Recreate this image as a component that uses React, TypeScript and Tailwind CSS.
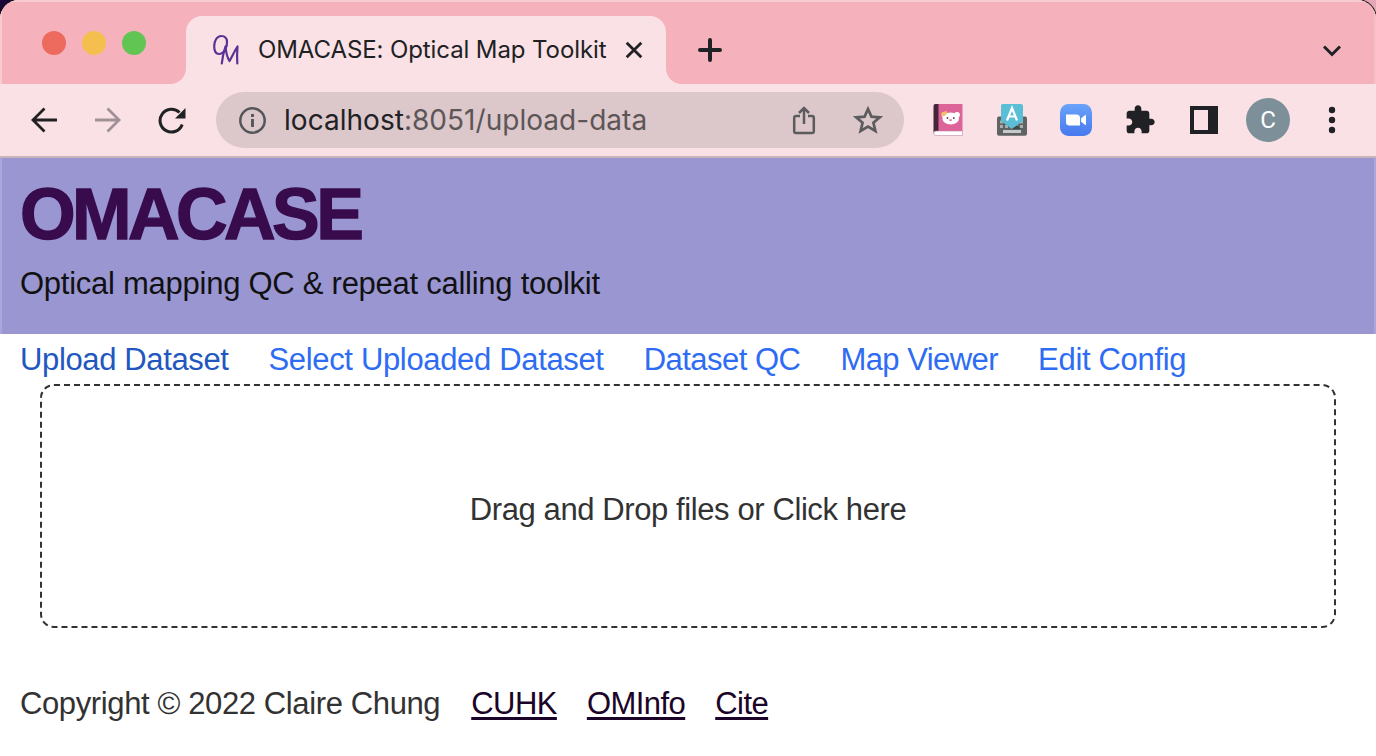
import React from "react";

const navItems = [
  { label: "Upload Dataset", style: "tracking-[-0.37px] text-[#2357c0]" },
  { label: "Select Uploaded Dataset", style: "tracking-[-0.34px]" },
  { label: "Dataset QC", style: "tracking-[-0.52px]" },
  { label: "Map Viewer", style: "tracking-[-0.54px]" },
  { label: "Edit Config", style: "tracking-[-0.32px]" },
];
const footerLinks = ["CUHK", "OMInfo", "Cite"];

function TabStrip() {
  return (
    <div className="flex h-[84px] items-end bg-[#f5b1bc] shadow-[inset_2px_2px_0_#f8cad2,inset_-2px_0_0_#f7bfc8]">
      <div className="flex h-[84px] w-[170px] gap-4 pt-[31px] pl-[42px]">
        <span className="size-6 rounded-full bg-[#ed6a5e]" />
        <span className="size-6 rounded-full bg-[#f5bf4f]" />
        <span className="size-6 rounded-full bg-[#61c554]" />
      </div>
      <svg className="size-4" viewBox="0 0 16 16">
        <path d="M16 0V16H0C9 16 16 9 16 0Z" fill="#fae1e5" />
      </svg>
      <div className="flex h-[68px] w-[480px] items-center rounded-t-[16px] bg-[#fae1e5] pl-[26px]">
        <svg className="h-[32px] w-[28px] shrink-0" viewBox="0 0 28 32" fill="none" stroke="#5b3296" strokeWidth="2.200" strokeLinecap="round" strokeLinejoin="round">
          <path d="M9.500 2C5 1.700 2.200 7 2.200 12C2.200 17 4 20 7 20C12 20 15.500 13 15 7.500C14.700 3.800 12.500 2 9.500 2Z" />
          <path d="M9.800 29.500C10.500 23 12 17 13.500 12.500C14 18 15.500 24 17.500 27C20 23 22.500 17 25.500 12.500C25 18 25 24 25.300 29.500" />
        </svg>
        <span className="ml-[18px] w-[349px] whitespace-nowrap font-['Inter'] text-[24px] leading-8 tracking-[-0.1px] text-[#202124]">
          OMACASE: Optical Map Toolkit
        </span>
        <svg className="ml-[18px] size-[18px]" viewBox="0 0 18 18" stroke="#202124" strokeWidth="2.800">
          <path d="M1.700 1.700L16.300 16.300M16.300 1.700L1.700 16.300" />
        </svg>
      </div>
      <svg className="size-4" viewBox="0 0 16 16">
        <path d="M0 0V16H16C7 16 0 9 0 0Z" fill="#fae1e5" />
      </svg>
      <svg className="mb-[22px] ml-4 size-6" viewBox="0 0 24 24" stroke="#202124" strokeWidth="4" strokeLinecap="round">
        <path d="M12 2V22M2 12H22" />
      </svg>
      <svg className="mr-[35px] mb-[27px] ml-auto h-[12px] w-[18px]" viewBox="0 0 18 12" fill="none" stroke="#202124" strokeWidth="3">
        <path d="M1 1.500L9 9.500L17 1.500" />
      </svg>
    </div>
  );
}

function BackArrow({ color }: { color: string }) {
  return (
    <svg className="h-[26px] w-[26px]" viewBox="0 0 26 26" fill="none" stroke={color} strokeWidth="2.800">
      <path d="M26 13H2M13.500 1.500L2 13L13.500 24.500" />
    </svg>
  );
}

function Toolbar() {
  return (
    <div className="flex h-[74px] items-center border-b-2 border-[#c9b4b9] bg-[#fae1e5] pl-[31px]">
      <BackArrow color="#202124" />
      <span className="ml-[38px] rotate-180">
        <BackArrow color="#9f9195" />
      </span>
      <svg className="ml-[37px] h-[27px] w-[28px]" viewBox="0 0 28 27" fill="none">
        <path d="M24.200 17.500A11.400 11.400 0 1 1 21.500 5.500" stroke="#202124" strokeWidth="3" />
        <path d="M27.500 1V11.500H17Z" fill="#202124" />
      </svg>

      <div className="ml-[30px] flex h-14 w-[688px] items-center rounded-full bg-[#dcc7ca] pl-[23px]">
        <svg className="size-[27px] shrink-0" viewBox="0 0 27 27" fill="none">
          <circle cx="13.500" cy="13.500" r="12.200" stroke="#54565a" strokeWidth="2.500" />
          <path d="M13.500 12V20M13.500 7V10" stroke="#54565a" strokeWidth="2.900" />
        </svg>
        <div className="ml-[18px] w-[508px] whitespace-nowrap font-['Inter'] text-[28px] leading-9 tracking-[0.03px] text-[#5c5658]">
          <span className="text-[#202124]">localhost</span>:8051/upload-data
        </div>
        <svg className="h-[30px] w-[24px] shrink-0" viewBox="0 0 24 30" fill="none" stroke="#5c5c5e" strokeWidth="2.500">
          <path d="M8 11H4Q2.200 11 2.200 12.800V26.200Q2.200 28 4 28H20Q21.800 28 21.800 26.200V12.800Q21.800 11 20 11H16M12 19V3.500M7 8L12 3L17 8" />
        </svg>
        <svg className="ml-9 h-[30px] w-[32px] shrink-0" viewBox="0 0 32 30" fill="none" stroke="#5c5c5e" strokeWidth="2.700">
          <path d="M16 4L19.400 11.600L27.800 12.300L21.400 17.700L23.400 26L16 21.600L8.600 26L10.600 17.700L4.200 12.300L12.600 11.600Z" />
        </svg>
      </div>

      <svg className="ml-[29px] size-8" viewBox="0 0 32 32">
        <path d="M2 0H29.500V27H6L2 31Z" fill="#dc6498" />
        <path d="M0.500 2Q0.500 0 2.500 0H5.500V27L1.500 30Q0.500 29 0.500 27Z" fill="#482438" />
        <path d="M2.800 27H29.500V31.500H2.800Q0.800 31.500 0.800 29.200Q0.800 27 2.800 27Z" fill="#fff" stroke="#bd8ba2" strokeWidth="0.600" />
        <circle cx="11.500" cy="10.800" r="2.900" fill="#fff" />
        <circle cx="24" cy="10.800" r="2.900" fill="#fff" />
        <ellipse cx="17.700" cy="14.400" rx="8.300" ry="6" fill="#fff" />
        <circle cx="10.500" cy="10" r="2.200" fill="#f4bb6a" />
        <circle cx="12.600" cy="8.700" r="1.700" fill="#f4bb6a" />
        <circle cx="14.500" cy="14" r="0.900" fill="#70354d" />
        <circle cx="20.800" cy="14" r="0.900" fill="#70354d" />
        <path d="M16 15.500Q17.600 18.500 19.200 15.500Z" fill="#d65078" />
      </svg>

      <svg className="ml-[31px] size-8" viewBox="0 0 32 32">
        <rect x="1" y="12.500" width="30" height="19.300" rx="2" fill="#606363" />
        <path d="M4 18H29M4 22.500H29" stroke="#a8adad" strokeWidth="3" strokeDasharray="3 2" />
        <rect x="7" y="26" width="18" height="3" fill="#c7caca" />
        <path d="M6.500 0H25Q27 0 27 2V17L16 25L5 17V1.500Q5 0 6.500 0Z" fill="#5abfd6" />
        <path d="M16 25L21 21.300L25 25Z" fill="#3f4949" />
        <path d="M11 16.500L16 4L21 16.500M13 12.500H19" stroke="#fff" strokeWidth="2.200" fill="none" />
      </svg>

      <svg className="ml-8 size-8" viewBox="0 0 32 32">
        <defs>
          <linearGradient id="camera" x1="0" y1="0" x2="0" y2="1">
            <stop stopColor="#6aa3fa" />
            <stop offset="1" stopColor="#4679ef" />
          </linearGradient>
        </defs>
        <rect width="32" height="32" rx="8.500" fill="url(#camera)" />
        <path d="M6 10.500H16.500Q20 10.500 20 14V21.500H9.500Q6 21.500 6 18ZM21 14.500L24.500 11.500Q26 10.500 26 12V20Q26 21.500 24.500 20.500L21 17.500Z" fill="#fff" />
      </svg>

      <svg className="ml-8 size-8" viewBox="0 0 24 24" fill="#202124">
        <path d="M20.500 11H19V7c0-1.100-.9-2-2-2h-4V3.500C13 2.120 11.880 1 10.500 1S8 2.120 8 3.500V5H4c-1.100 0-1.990.9-1.990 2v3.800H3.500c1.490 0 2.700 1.210 2.700 2.700s-1.210 2.700-2.700 2.700H2V20c0 1.100.9 2 2 2h3.800v-1.500c0-1.490 1.210-2.700 2.700-2.700s2.700 1.210 2.700 2.700V22H17c1.100 0 2-.9 2-2v-4h1.500c1.380 0 2.500-1.120 2.500-2.500S21.880 11 20.500 11z" />
      </svg>
      <div className="ml-[34px] h-7 w-7 border-4 border-r-[10px] border-[#202124]" />
      <div className="ml-7 flex size-11 items-center justify-center rounded-full bg-[#7d909a] font-['Roboto'] text-[24px] leading-none text-white">
        C
      </div>
      <svg className="ml-[38px] h-7 w-2" viewBox="0 0 8 28" fill="#202124">
        <circle cx="4" cy="4" r="3.200" />
        <circle cx="4" cy="14" r="3.200" />
        <circle cx="4" cy="24" r="3.200" />
      </svg>
    </div>
  );
}

export default function App() {
  return (
    <div className="h-[756px] w-[1376px] overflow-hidden bg-linear-to-r from-[#1c0638] from-50% to-[#e5a7b5] to-50%">
      <div className="flex h-full flex-col overflow-hidden rounded-t-[19px] bg-white font-['Liberation_Sans',sans-serif] text-[31px] leading-[48px] shadow-[0_0_0_1px_#111]">
        <TabStrip />
        <Toolbar />
        <header className="h-[176px] border-x-2 border-[#aaa6dc] bg-[#9a96d2] pl-[18px]">
          <h1 className="pt-[12px] text-[71.5px] leading-[88px] font-bold tracking-[-3.6px] text-[#380b4c] [-webkit-text-stroke:1.4px_#380b4c]">OMACASE</h1>
          <p className="pt-[2px] tracking-[-0.26px] text-[#111]">Optical mapping QC &amp; repeat calling toolkit</p>
        </header>
        <nav className="flex h-[50px] gap-10 pt-[2px] pl-5 whitespace-nowrap text-[#2e6cf3]">
          {navItems.map((item) => (
            <a key={item.label} className={item.style}>{item.label}</a>
          ))}
        </nav>
        <main className="mx-10 flex h-[244px] items-center justify-center rounded-[14px] border-2 border-dashed border-[#323232] pt-[7px] tracking-[-0.4px] text-[#323232]">
          Drag and Drop files or Click here
        </main>
        <footer className="flex gap-[30px] pt-[52px] pl-5 whitespace-nowrap text-[#323232]">
          <span className="mr-px tracking-[-0.38px]">Copyright © 2022 Claire Chung</span>
          {footerLinks.map((item) => (
            <a key={item} className="tracking-[-0.55px] text-[#1b0427] underline decoration-[3px] underline-offset-[3px]">{item}</a>
          ))}
        </footer>
      </div>
    </div>
  );
}
